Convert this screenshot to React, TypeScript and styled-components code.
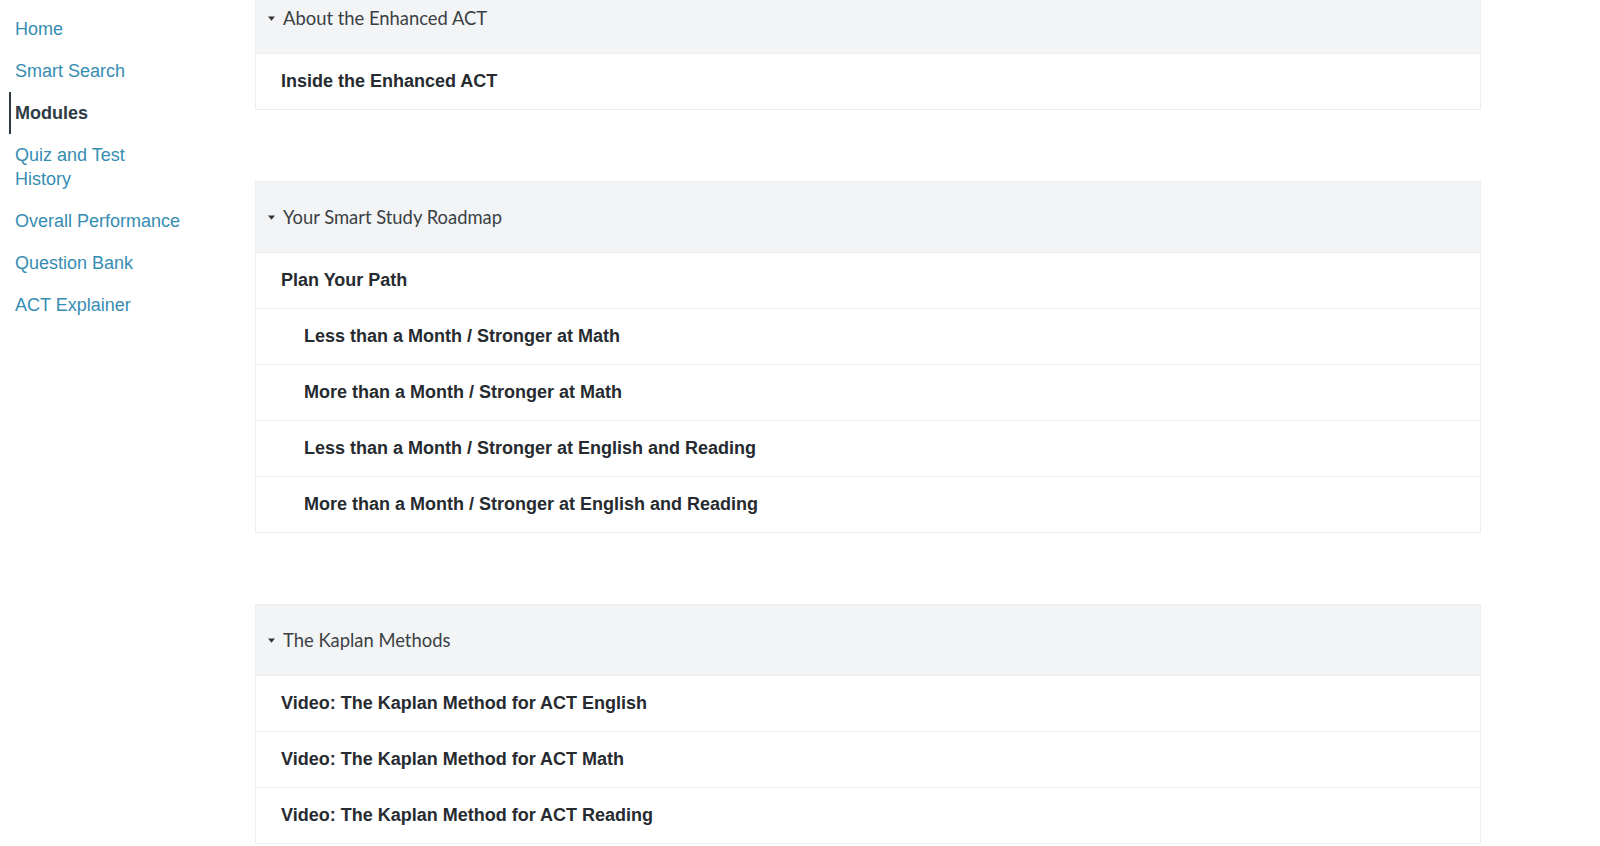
import React from "react";
import styled, { createGlobalStyle } from "styled-components";

type Item = { title: string; indent?: boolean };
type Module = { name: string; items: Item[] };

const navLinks = [
  "Home",
  "Smart Search",
  "Modules",
  "Quiz and Test History",
  "Overall Performance",
  "Question Bank",
  "ACT Explainer"
];

const modules: Module[] = [
  {
    name: "About the Enhanced ACT",
    items: [{ title: "Inside the Enhanced ACT" }]
  },
  {
    name: "Your Smart Study Roadmap",
    items: [
      { title: "Plan Your Path" },
      { title: "Less than a Month / Stronger at Math", indent: true },
      { title: "More than a Month / Stronger at Math", indent: true },
      { title: "Less than a Month / Stronger at English and Reading", indent: true },
      { title: "More than a Month / Stronger at English and Reading", indent: true }
    ]
  },
  {
    name: "The Kaplan Methods",
    items: [
      { title: "Video: The Kaplan Method for ACT English" },
      { title: "Video: The Kaplan Method for ACT Math" },
      { title: "Video: The Kaplan Method for ACT Reading" }
    ]
  }
];

const Caret: React.FC = () => (
  <svg width="7" height="5" viewBox="0 0 7 5">
    <path d="M0 0.5 L7 0.5 L3.5 4.8 Z" fill="#333" />
  </svg>
);

const App: React.FC = () => {
  return (
    <>
      <GlobalStyle />
      <Layout>
        <Sidebar>
          {navLinks.map((label) => (
            <NavLink key={label} $active={label === "Modules"}>
              {label}
            </NavLink>
          ))}
        </Sidebar>
        <Content>
          {modules.map((m) => (
            <ModuleBox key={m.name}>
              <ModuleHeader>
                <Caret />
                <HeaderTitle>{m.name}</HeaderTitle>
              </ModuleHeader>
              {m.items.map((it) => (
                <ItemRow key={it.title} $indent={!!it.indent}>
                  {it.title}
                </ItemRow>
              ))}
            </ModuleBox>
          ))}
        </Content>
      </Layout>
    </>
  );
};

export default App;

const GlobalStyle = createGlobalStyle`
  html, body {
    margin: 0;
    height: 846px;
    overflow: hidden;
    background: #fff;
  }
  body {
    font-family: "Liberation Sans", Arial, sans-serif;
  }
`;

const Layout = styled.div`
  display: grid;
  grid-template-columns: 255px 1226px;
  align-items: start;
`;

const Sidebar = styled.nav`
  display: flex;
  flex-direction: column;
  align-items: flex-start;
  padding-top: 8px;
`;

const NavLink = styled.a<{ $active: boolean }>`
  display: block;
  width: 168px;
  margin-left: 9px;
  padding: 9px 0 9px 4px;
  border-left: 2px solid ${(p) => (p.$active ? "#2d3b45" : "transparent")};
  font-size: 18px;
  line-height: 24px;
  color: ${(p) => (p.$active ? "#2d3b45" : "#368db2")};
  font-weight: ${(p) => (p.$active ? 700 : 400)};
  cursor: pointer;
`;

const Content = styled.main`
  display: flex;
  flex-direction: column;
  gap: 71px;
  margin-top: -18px;
`;

const ModuleBox = styled.section`
  border: 1px solid #eceef0;
  background: #fff;
`;

const ModuleHeader = styled.div`
  display: flex;
  align-items: center;
  gap: 8px;
  height: 70px;
  padding-left: 12px;
  background: #f3f4f6;
  border-bottom: 1px solid #eceef0;
`;

const HeaderTitle = styled.span`
  font-family: Lato, "Liberation Sans", sans-serif;
  font-size: 18.4px;
  color: #3a3f44;
`;

const ItemRow = styled.div<{ $indent: boolean }>`
  display: flex;
  align-items: center;
  height: 55px;
  padding-left: ${(p) => (p.$indent ? "48px" : "25px")};
  font-size: 18px;
  font-weight: 700;
  color: #262b30;
  & + & {
    border-top: 1px solid #eef0f2;
  }
`;
